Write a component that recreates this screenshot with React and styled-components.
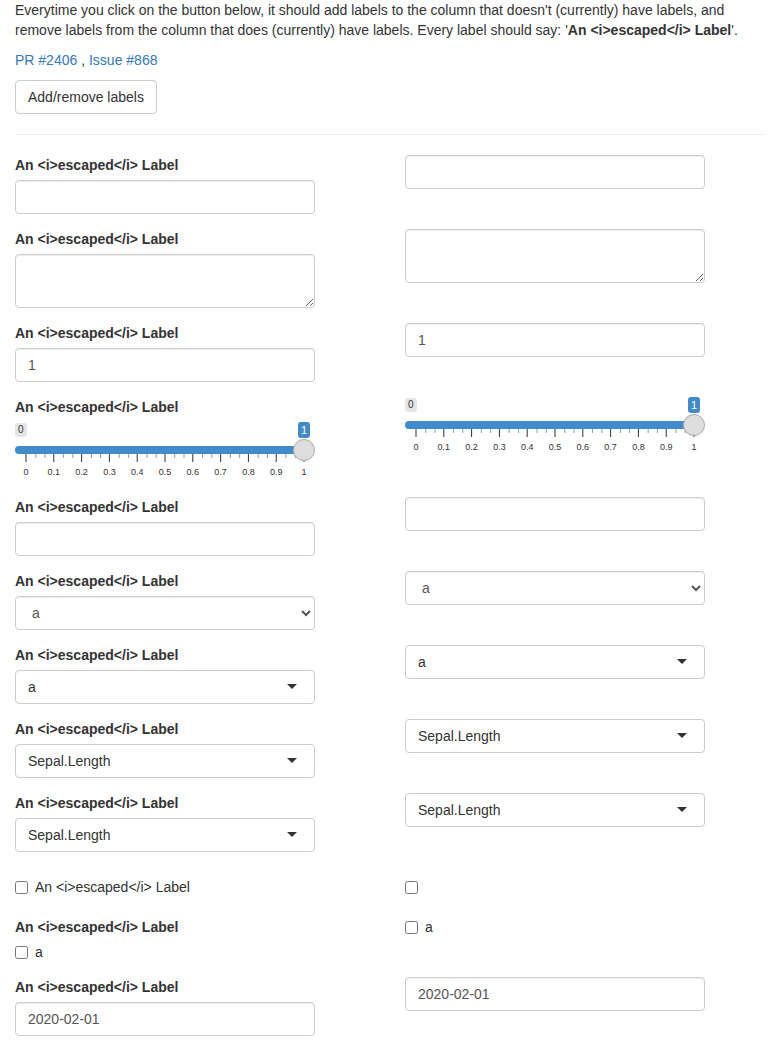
import React from "react"
import styled, { createGlobalStyle, css } from "styled-components"

const LABEL = "An <i>escaped</i> Label"

const GlobalStyle = createGlobalStyle`
  * { box-sizing: border-box; }
  body {
    margin: 0;
    background: #fff;
    color: #333;
    font-family: "Liberation Sans", Arial, Helvetica, sans-serif;
    font-size: 14px;
    line-height: 1.42857143;
  }
`

const Slider = () => {
  const span = 278
  const majors = Array.from({ length: 11 }, (_, i) => 11 + (i * span) / 10)
  const minors = []
  majors.slice(0, -1).forEach(x => {
    minors.push(x + span / 30, x + (2 * span) / 30)
  })
  return (
    <SliderBox>
      <SliderLabels>
        <MinBadge>0</MinBadge>
        <ValueBadge>1</ValueBadge>
      </SliderLabels>
      <Track>
        <Bar />
        <Handle />
      </Track>
      <Grid width="300" height="28" viewBox="0 0 300 28">
        {minors.map(x => (
          <rect key={"m" + x} x={x} y="0" width="1" height="4" fill="#999" />
        ))}
        {majors.map((x, i) => (
          <g key={"M" + i}>
            <rect x={x - 0.5} y="0" width="1" height="8" fill="#333" />
            <text x={x} y="21" textAnchor="middle" fontSize="9" fill="#333">
              {i === 0 ? "0" : i === 10 ? "1" : "0." + i}
            </text>
          </g>
        ))}
      </Grid>
    </SliderBox>
  )
}

const App = () => (
  <Page>
    <GlobalStyle />
    <Intro>
      Everytime you click on the button below, it should add labels to the column that doesn't
      (currently) have labels, and remove labels from the column that does (currently) have labels.
      Every label should say: '<b>{LABEL}</b>'.
    </Intro>
    <Links>
      <a href="#pr">PR #2406</a> , <a href="#issue">Issue #868</a>
    </Links>
    <Button>Add/remove labels</Button>
    <Divider />

    <Row>
      <Column>
        <FormGroup>
          <Label>{LABEL}</Label>
          <TextField type="text" defaultValue="" />
        </FormGroup>
        <FormGroup>
          <Label>{LABEL}</Label>
          <TextArea defaultValue="" />
        </FormGroup>
        <FormGroup>
          <Label>{LABEL}</Label>
          <TextField type="text" defaultValue="1" />
        </FormGroup>
        <FormGroup>
          <Label>{LABEL}</Label>
          <Slider />
        </FormGroup>
        <FormGroup>
          <Label>{LABEL}</Label>
          <TextField type="password" defaultValue="" />
        </FormGroup>
        <FormGroup>
          <Label>{LABEL}</Label>
          <NativeSelect defaultValue="a">
            <option value="a">a</option>
          </NativeSelect>
        </FormGroup>
        <FormGroup>
          <Label>{LABEL}</Label>
          <Selectize>a</Selectize>
        </FormGroup>
        <FormGroup>
          <Label>{LABEL}</Label>
          <Selectize>Sepal.Length</Selectize>
        </FormGroup>
        <FormGroup>
          <Label>{LABEL}</Label>
          <Selectize>Sepal.Length</Selectize>
        </FormGroup>
        <CheckField>
          <CheckRow>
            <Checkbox type="checkbox" />
            <span>{LABEL}</span>
          </CheckRow>
        </CheckField>
        <FormGroup>
          <Label>{LABEL}</Label>
          <CheckRow>
            <Checkbox type="checkbox" />
            <span>a</span>
          </CheckRow>
        </FormGroup>
        <FormGroup>
          <Label>{LABEL}</Label>
          <TextField type="text" defaultValue="2020-02-01" />
        </FormGroup>
      </Column>

      <Column>
        <FormGroup $bare>
          <TextField type="text" defaultValue="" />
        </FormGroup>
        <FormGroup $bare>
          <TextArea defaultValue="" />
        </FormGroup>
        <FormGroup $bare>
          <TextField type="text" defaultValue="1" />
        </FormGroup>
        <FormGroup $bare>
          <Slider />
        </FormGroup>
        <FormGroup $bare>
          <TextField type="password" defaultValue="" />
        </FormGroup>
        <FormGroup $bare>
          <NativeSelect defaultValue="a">
            <option value="a">a</option>
          </NativeSelect>
        </FormGroup>
        <FormGroup $bare>
          <Selectize>a</Selectize>
        </FormGroup>
        <FormGroup $bare>
          <Selectize>Sepal.Length</Selectize>
        </FormGroup>
        <FormGroup $bare>
          <Selectize>Sepal.Length</Selectize>
        </FormGroup>
        <CheckField>
          <CheckRow>
            <Checkbox type="checkbox" />
          </CheckRow>
        </CheckField>
        <FormGroup $bare>
          <CheckRow>
            <Checkbox type="checkbox" />
            <span>a</span>
          </CheckRow>
        </FormGroup>
        <FormGroup $bare>
          <TextField type="text" defaultValue="2020-02-01" />
        </FormGroup>
      </Column>
    </Row>
  </Page>
)

export default App

const Page = styled.div`
  padding: 0 15px;
`

const Intro = styled.p`
  margin: 0 0 10px;
  b {
    font-weight: 700;
  }
`

const Links = styled.p`
  margin: 0 0 10px;
  a {
    color: #337ab7;
    text-decoration: none;
  }
`

const Button = styled.button`
  display: inline-block;
  padding: 6px 12px;
  font-family: inherit;
  font-size: 14px;
  line-height: 1.42857143;
  color: #333;
  background: #fff;
  border: 1px solid #ccc;
  border-radius: 4px;
  cursor: pointer;
`

const Divider = styled.hr`
  margin: 20px 0;
  border: 0;
  border-top: 1px solid #eee;
`

const Row = styled.div`
  display: grid;
  grid-template-columns: 1fr 1fr;
  column-gap: 30px;
`

const Column = styled.div`
  display: flex;
  flex-direction: column;
  align-items: flex-start;
`

const FormGroup = styled.div`
  width: 300px;
  margin-bottom: ${p => (p.$bare ? 40 : 15)}px;
`

const Label = styled.label`
  display: block;
  margin-bottom: 5px;
  font-weight: 700;
`

const control = css`
  display: block;
  width: 100%;
  height: 34px;
  padding: 6px 12px;
  font-family: inherit;
  font-size: 14px;
  line-height: 1.42857143;
  color: #555;
  background: #fff;
  border: 1px solid #ccc;
  border-radius: 4px;
  box-shadow: inset 0 1px 1px rgba(0, 0, 0, 0.075);
  outline: none;
`

const TextField = styled.input`
  ${control}
`

const TextArea = styled.textarea`
  ${control}
  height: 54px;
  resize: vertical;
`

const NativeSelect = styled.select`
  ${control}
`

const Selectize = styled.div`
  ${control}
  position: relative;
  color: #333;
  box-shadow: none;
  &::after {
    content: "";
    position: absolute;
    top: 50%;
    right: 17px;
    margin-top: -3px;
    border-style: solid;
    border-width: 5px 5px 0 5px;
    border-color: #333 transparent transparent transparent;
  }
`

const CheckField = styled.div`
  width: 300px;
  padding-top: 10px;
  margin-bottom: 20px;
`

const CheckRow = styled.label`
  display: flex;
  align-items: center;
  min-height: 20px;
  font-weight: 400;
`

const Checkbox = styled.input`
  width: 13px;
  height: 13px;
  margin: 0 7px 0 0;
`

const SliderBox = styled.div`
  width: 300px;
  height: 60px;
  display: flex;
  flex-direction: column;
`

const SliderLabels = styled.div`
  display: flex;
  justify-content: space-between;
  align-items: flex-start;
  height: 17px;
`

const MinBadge = styled.span`
  margin-top: 1px;
  padding: 1px 3px;
  font-size: 10px;
  line-height: 12px;
  color: #333;
  background: rgba(0, 0, 0, 0.1);
  border-radius: 3px;
`

const ValueBadge = styled.span`
  margin-right: 5px;
  padding: 1px 3px;
  font-size: 11px;
  line-height: 14px;
  color: #fff;
  background: #428bca;
  border-radius: 3px;
`

const Track = styled.div`
  display: flex;
  align-items: center;
  height: 22px;
`

const Bar = styled.div`
  flex: 1;
  height: 8px;
  margin-right: -11px;
  background: #428bca;
  border-radius: 4px 0 0 4px;
`

const Handle = styled.div`
  position: relative;
  z-index: 1;
  flex: none;
  width: 22px;
  height: 22px;
  background: #dedede;
  border: 1px solid #ababab;
  border-radius: 50%;
`

const Grid = styled.svg`
  display: block;
  margin-top: -7px;
  font-family: "Liberation Sans", Arial, sans-serif;
`
